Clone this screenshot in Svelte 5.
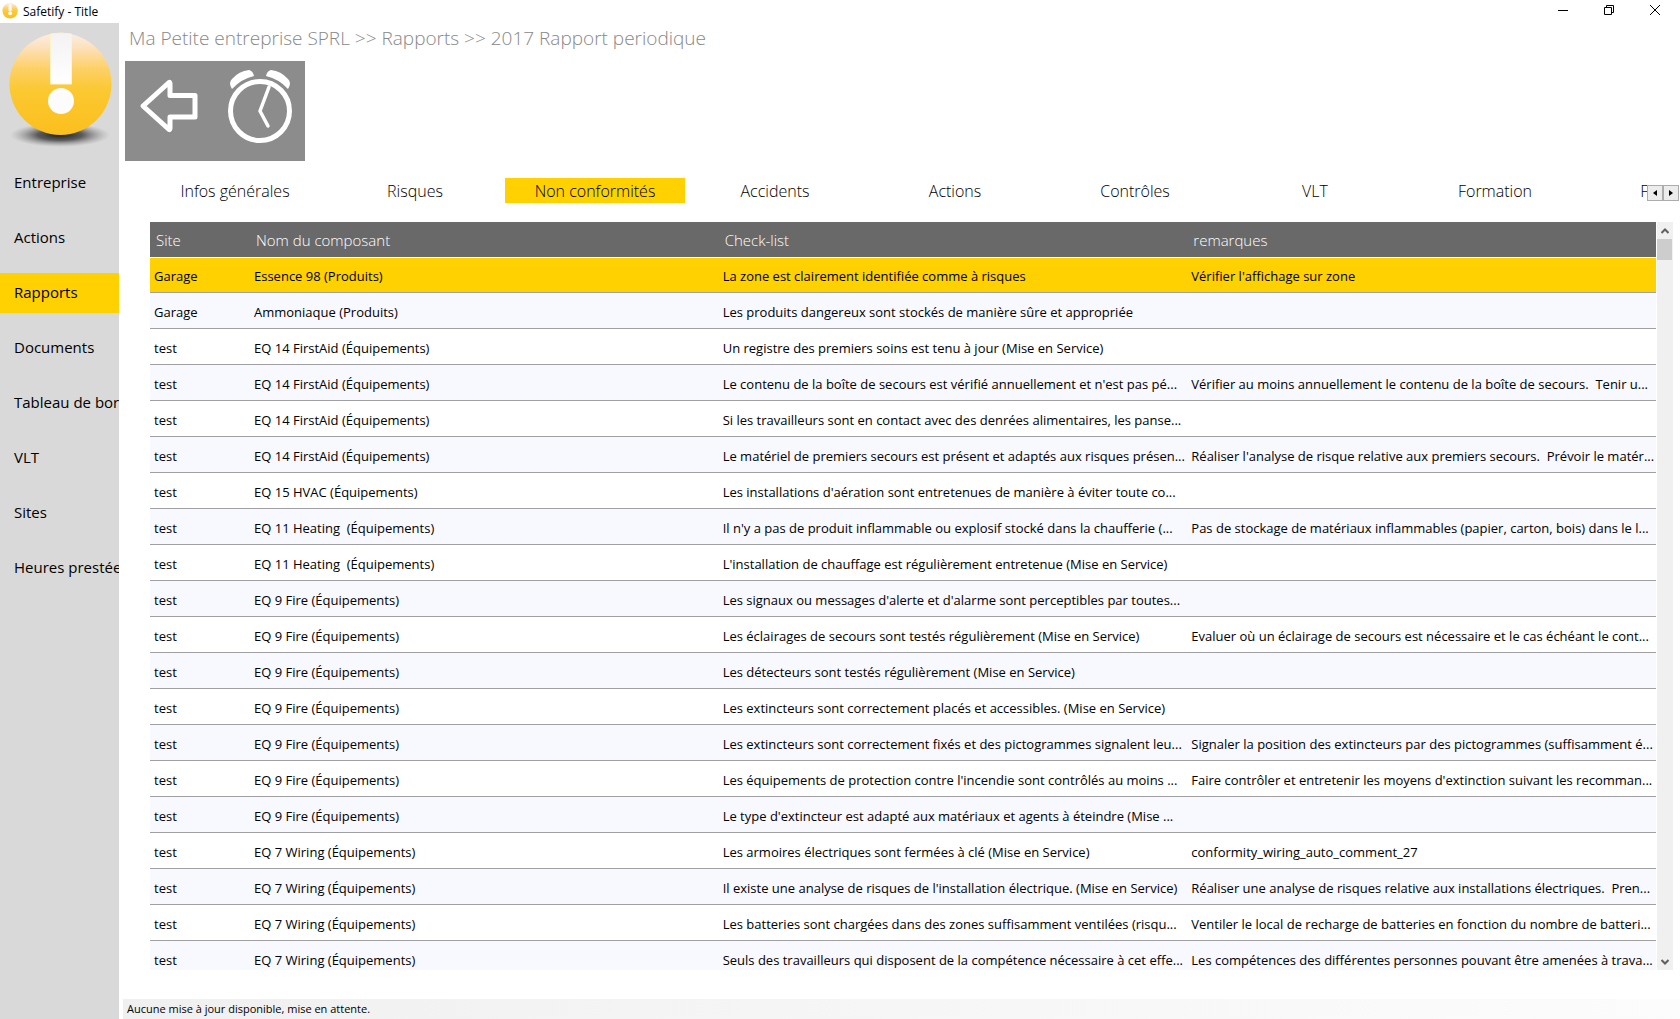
<script lang="ts">
	const menu = [
		'Entreprise',
		'Actions',
		'Rapports',
		'Documents',
		'Tableau de bord',
		'VLT',
		'Sites',
		'Heures prestées'
	];

	const tabs = [
		'Infos générales',
		'Risques',
		'Non conformités',
		'Accidents',
		'Actions',
		'Contrôles',
		'VLT',
		'Formation',
		'Fonctions'
	];

	const firstAid = 'EQ 14 FirstAid (Équipements)';
	const heating = 'EQ 11 Heating  (Équipements)';
	const fire = 'EQ 9 Fire (Équipements)';
	const wiring = 'EQ 7 Wiring (Équipements)';

	const rows = [
		['Garage', 'Essence 98 (Produits)', 'La zone est clairement identifiée comme à risques', "Vérifier l'affichage sur zone"],
		['Garage', 'Ammoniaque (Produits)', 'Les produits dangereux sont stockés de manière sûre et appropriée', ''],
		['test', firstAid, 'Un registre des premiers soins est tenu à jour (Mise en Service)', ''],
		['test', firstAid, "Le contenu de la boîte de secours est vérifié annuellement et n'est pas pé...", 'Vérifier au moins annuellement le contenu de la boîte de secours.  Tenir u...'],
		['test', firstAid, 'Si les travailleurs sont en contact avec des denrées alimentaires, les panse...', ''],
		['test', firstAid, 'Le matériel de premiers secours est présent et adaptés aux risques présen...', "Réaliser l'analyse de risque relative aux premiers secours.  Prévoir le matér..."],
		['test', 'EQ 15 HVAC (Équipements)', "Les installations d'aération sont entretenues de manière à éviter toute co...", ''],
		['test', heating, "Il n'y a pas de produit inflammable ou explosif stocké dans la chaufferie (...", 'Pas de stockage de matériaux inflammables (papier, carton, bois) dans le l...'],
		['test', heating, "L'installation de chauffage est régulièrement entretenue (Mise en Service)", ''],
		['test', fire, "Les signaux ou messages d'alerte et d'alarme sont perceptibles par toutes...", ''],
		['test', fire, 'Les éclairages de secours sont testés régulièrement (Mise en Service)', 'Evaluer où un éclairage de secours est nécessaire et le cas échéant le cont...'],
		['test', fire, 'Les détecteurs sont testés régulièrement (Mise en Service)', ''],
		['test', fire, 'Les extincteurs sont correctement placés et accessibles. (Mise en Service)', ''],
		['test', fire, 'Les extincteurs sont correctement fixés et des pictogrammes signalent leu...', 'Signaler la position des extincteurs par des pictogrammes (suffisamment é...'],
		['test', fire, "Les équipements de protection contre l'incendie sont contrôlés au moins ...", "Faire contrôler et entretenir les moyens d'extinction suivant les recomman..."],
		['test', fire, "Le type d'extincteur est adapté aux matériaux et agents à éteindre (Mise ...", ''],
		['test', wiring, 'Les armoires électriques sont fermées à clé (Mise en Service)', 'conformity_wiring_auto_comment_27'],
		['test', wiring, "Il existe une analyse de risques de l'installation électrique. (Mise en Service)", 'Réaliser une analyse de risques relative aux installations électriques.  Pren...'],
		['test', wiring, 'Les batteries sont chargées dans des zones suffisamment ventilées (risqu...', 'Ventiler le local de recharge de batteries en fonction du nombre de batteri...'],
		['test', wiring, 'Seuls des travailleurs qui disposent de la compétence nécessaire à cet effe...', 'Les compétences des différentes personnes pouvant être amenées à trava...']
	];

	let activeMenu = $state('Rapports');
	let activeTab = $state('Non conformités');
	let selected = $state(0);
</script>

{#snippet badge()}
	<circle cx="60.5" cy="61" r="51" fill="url(#ball)" />
	<path d="M50.5 11 Q61 9 71.500 11 V61 H50.5 Z" fill="url(#bar)" stroke="#fff3c8" stroke-width="1" />
	<circle cx="61" cy="78" r="13" fill="#fcfcfc" />
{/snippet}

<div class="window">
	<header class="titlebar">
		<svg class="app-icon" viewBox="9 10 102 106" aria-hidden="true">
			{@render badge()}
		</svg>
		<span class="title">Safetify - Title</span>
		<button class="caption" aria-label="Réduire">
			<svg width="10" height="10" viewBox="0 0 10 10"><path d="M0 5.5H10" /></svg>
		</button>
		<button class="caption" aria-label="Restaurer">
			<svg width="10" height="10" viewBox="0 0 10 10">
				<path d="M0.5 2.5H7.5V9.5H0.5ZM2.5 2.5V0.5H9.5V7.5H7.5" />
			</svg>
		</button>
		<button class="caption" aria-label="Fermer">
			<svg width="10" height="10" viewBox="0 0 10 10"><path d="M0 0L10 10M10 0L0 10" /></svg>
		</button>
	</header>

	<div class="body">
		<aside class="sidebar">
			<svg class="logo" width="119" height="130" viewBox="0 0 119 130" aria-hidden="true">
				<defs>
					<linearGradient id="ball" x1="0" y1="0" x2="0" y2="1">
						<stop offset="0" stop-color="#fbeee6" />
						<stop offset="0.15" stop-color="#fde0b8" />
						<stop offset="0.35" stop-color="#fdd066" />
						<stop offset="0.55" stop-color="#fbc932" />
						<stop offset="1" stop-color="#fbbf1c" />
					</linearGradient>
					<linearGradient id="bar" x1="0" y1="0" x2="0" y2="1">
						<stop offset="0" stop-color="#f4f2f2" />
						<stop offset="1" stop-color="#ffffff" />
					</linearGradient>
					<radialGradient id="shadow">
						<stop offset="0" stop-color="#1c1c1c" />
						<stop offset="0.45" stop-color="#3c3c3c" stop-opacity="0.8" />
						<stop offset="1" stop-color="#888888" stop-opacity="0" />
					</radialGradient>
				</defs>
				<ellipse cx="60" cy="112" rx="50" ry="12" fill="url(#shadow)" />
				{@render badge()}
			</svg>
			<nav>
				{#each menu as item}
					<button
						class="menu-item"
						class:active={item === activeMenu}
						onclick={() => (activeMenu = item)}>{item}</button
					>
				{/each}
			</nav>
		</aside>

		<main>
			<h1>Ma Petite entreprise SPRL &gt;&gt; Rapports &gt;&gt; 2017 Rapport periodique</h1>

			<div class="toolbar">
				<button class="tool" aria-label="Retour">
					<svg width="90" height="100" viewBox="0 0 90 100">
						<path
							d="M18 45 L44 21.5 Q45 21 45 23 V34.5 H70 V56 H45 V67 Q45 69 44 68.500 Z"
							fill="none"
							stroke="#fff"
							stroke-width="5"
							stroke-linejoin="round"
						/>
					</svg>
				</button>
				<button class="tool" aria-label="Rappel">
					<svg width="90" height="100" viewBox="0 0 90 100">
						<circle cx="45" cy="50" r="29.500" fill="none" stroke="#fff" stroke-width="5" />
						<path
							d="M17 28 Q13 22 17 18 Q24 10 34 9 Q38 10 39 15 Q26 18 17 28Z M73 28 Q77 22 73 18 Q66 10 56 9 Q52 10 51 15 Q64 18 73 28Z"
							fill="#fff"
						/>
						<path
							d="M54 26 L45 50 L53 65"
							fill="none"
							stroke="#fff"
							stroke-width="3.500"
							stroke-linecap="round"
							stroke-linejoin="round"
						/>
					</svg>
				</button>
			</div>

			<div class="tab-strip">
				<div class="tabs" role="tablist">
					{#each tabs as tab}
						<button
							class="tab"
							class:active={tab === activeTab}
							role="tab"
							aria-selected={tab === activeTab}
							onclick={() => (activeTab = tab)}>{tab}</button
						>
					{/each}
				</div>
				<div class="tab-scroll">
					<button aria-label="Onglets précédents">
						<svg width="4" height="6" viewBox="0 0 4 6"><path d="M4 0V6L0 3Z" /></svg>
					</button>
					<button aria-label="Onglets suivants">
						<svg width="4" height="6" viewBox="0 0 4 6"><path d="M0 0V6L4 3Z" /></svg>
					</button>
				</div>
			</div>

			<div class="grid">
				<div class="grid-view">
					<table>
						<thead>
							<tr>
								<th class="site">Site</th>
								<th>Nom du composant</th>
								<th>Check-list</th>
								<th>remarques</th>
							</tr>
						</thead>
						<tbody>
							{#each rows as row, i}
								<tr class:selected={i === selected} onclick={() => (selected = i)}>
									{#each row as cell}
										<td>{cell}</td>
									{/each}
								</tr>
							{/each}
						</tbody>
					</table>
				</div>
				<div class="scrollbar">
					<button aria-label="Défiler vers le haut">
						<svg width="8" height="6" viewBox="0 0 8 6"><path d="M0.5 5L4 1.500L7.500 5" /></svg>
					</button>
					<div class="thumb"></div>
					<button class="down" aria-label="Défiler vers le bas">
						<svg width="8" height="6" viewBox="0 0 8 6"><path d="M0.5 1L4 4.500L7.500 1" /></svg>
					</button>
				</div>
			</div>

			<footer>Aucune mise à jour disponible, mise en attente.</footer>
		</main>
	</div>
</div>

<style>
	:global(body) {
		margin: 0;
		background: #fff;
	}

	.window {
		display: flex;
		flex-direction: column;
		height: 100vh;
		overflow: hidden;
		font-family: 'Open Sans', 'Noto Sans', sans-serif;
		color: #000;
	}

	button {
		border: 0;
		padding: 0;
		background: none;
		font: inherit;
		color: inherit;
	}

	.titlebar {
		display: flex;
		flex: none;
		height: 23px;
		padding-right: 2px;
		font-size: 12px;
		line-height: 23px;
	}

	.app-icon {
		width: 16px;
		height: 16px;
		margin: 3px 5px 0 2px;
	}

	.title {
		flex: 1;
	}

	.caption {
		display: flex;
		align-items: center;
		justify-content: center;
		width: 46px;
		height: 20px;
	}

	.caption path {
		fill: none;
		stroke: #000;
	}

	.body {
		display: flex;
		flex: 1;
		min-height: 0;
	}

	.sidebar {
		flex: none;
		width: 119px;
		overflow: hidden;
		background: #d9d9d9;
	}

	.logo {
		display: block;
	}

	nav {
		display: flex;
		flex-direction: column;
		gap: 15px;
		padding-top: 10px;
	}

	.menu-item {
		height: 40px;
		padding: 0 0 2px 14px;
		font-size: 15px;
		text-align: left;
		white-space: nowrap;
	}

	.active {
		background: #ffd100;
	}

	main {
		display: flex;
		flex-direction: column;
		flex: 1;
		min-width: 0;
	}

	h1 {
		margin: 0 0 8px 10px;
		font-size: 19px;
		line-height: 30px;
		font-weight: 300;
		color: #888;
	}

	.toolbar {
		display: flex;
		align-self: flex-start;
		margin-left: 6px;
		background: #8c8c8c;
	}

	.tool svg {
		display: block;
	}

	.tab-strip {
		display: flex;
		margin: 17px 1px 0 26px;
	}

	.tabs {
		display: flex;
		flex: 1;
		min-width: 0;
		overflow: hidden;
	}

	.tab {
		flex: none;
		width: 180px;
		height: 25px;
		font-size: 16px;
		font-weight: 300;
	}

	.tab-scroll {
		display: flex;
		align-self: flex-end;
		height: 18px;
	}

	.tab-scroll button {
		display: flex;
		align-items: center;
		justify-content: center;
		box-sizing: border-box;
		width: 16px;
		height: 16px;
		border: 1px solid #acacac;
		background: #ececec;
	}

	.grid {
		display: flex;
		flex: 1;
		min-height: 0;
		margin: 19px 7px 29px 31px;
	}

	.grid-view {
		flex: 1;
		min-width: 0;
		overflow: hidden;
	}

	table {
		width: 100%;
		table-layout: fixed;
		border-collapse: separate;
		border-spacing: 0;
	}

	th,
	td {
		box-sizing: border-box;
		height: 36px;
		padding: 2px 0 0 4px;
		border-bottom: 1px solid #a0a0a0;
		font-size: 13px;
		font-weight: 400;
		text-align: left;
		white-space: pre;
		overflow: hidden;
	}

	th {
		height: 35px;
		padding: 0 6px;
		border: 0;
		background: #696969;
		font-size: 15px;
		font-weight: 300;
		color: #fff;
	}

	.site {
		width: 100px;
	}

	tbody tr:first-child td {
		border-top: 1px solid #fff;
	}

	tbody tr:nth-child(even) {
		background: #f8f8ff;
	}

	tbody tr.selected {
		background: #ffd100;
	}

	.scrollbar {
		display: flex;
		flex-direction: column;
		width: 16px;
		margin-left: 1px;
		background: #f0f0f0;
	}

	.scrollbar button {
		display: flex;
		align-items: center;
		justify-content: center;
		width: 15px;
		height: 17px;
	}

	.scrollbar path {
		fill: none;
		stroke: #606060;
		stroke-width: 2;
	}

	.scrollbar .down {
		margin-top: auto;
	}

	.thumb {
		width: 15px;
		height: 21px;
		background: #cdcdcd;
	}

	footer {
		margin-left: 4px;
		padding-left: 4px;
		background: linear-gradient(to right, #f0f0f0, #fcfcfc);
		font-size: 11px;
		line-height: 20px;
	}
</style>
